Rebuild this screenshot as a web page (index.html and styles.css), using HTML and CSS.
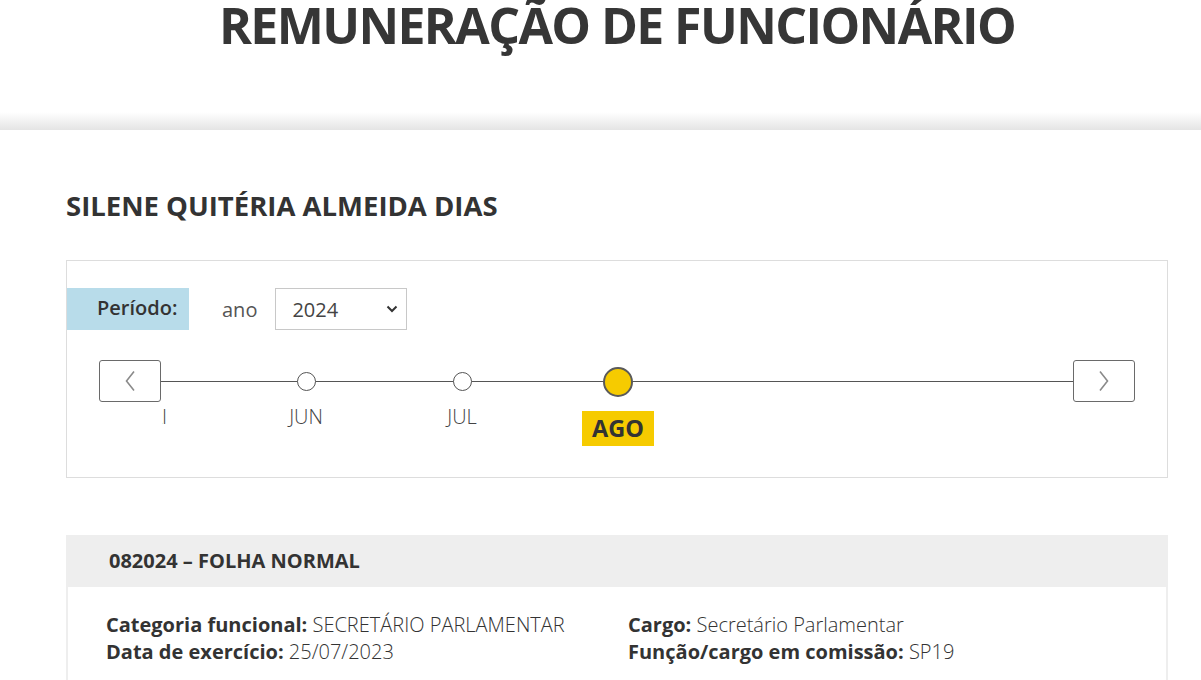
FILE: index.html
```html
<!DOCTYPE html>
<html lang="pt-BR">
<head>
<meta charset="utf-8">
<title>Remuneração de Funcionário</title>
<link rel="stylesheet" href="styles.css">
</head>
<body>
<header class="page-header">
  <div class="container">
    <h1 class="page-title">REMUNERAÇÃO DE FUNCIONÁRIO</h1>
  </div>
</header>
<main class="container main">
  <h2 class="person-name">SILENE QUITÉRIA ALMEIDA DIAS</h2>

  <section class="period-panel">
    <div class="period-row">
      <div class="period-label">Período:</div>
      <span class="year-label">ano</span>
      <div class="year-select">
        <span>2024</span>
        <svg class="select-chevron" width="12" height="8" viewBox="0 0 12 8"><path d="M1.5 1.5 L6 6 L10.5 1.5" fill="none" stroke="#333" stroke-width="2"/></svg>
      </div>
    </div>

    <div class="timeline">
      <button class="nav-btn" type="button" aria-label="Anterior">
        <svg width="12" height="22" viewBox="0 0 12 22"><path d="M10 1.5 L2.5 11 L10 20.5" fill="none" stroke="#8a8a8a" stroke-width="1.6"/></svg>
      </button>
      <div class="track-viewport">
        <div class="track-line"></div>
        <div class="track-window">
          <ol class="track">
            <li class="month"><span class="dot"></span><span class="month-label">MAI</span></li>
            <li class="month"><span class="dot"></span><span class="month-label">JUN</span></li>
            <li class="month"><span class="dot"></span><span class="month-label">JUL</span></li>
            <li class="month active"><span class="dot"></span><span class="month-label">AGO</span></li>
          </ol>
        </div>
      </div>
      <button class="nav-btn" type="button" aria-label="Próximo">
        <svg width="12" height="22" viewBox="0 0 12 22"><path d="M2 1.5 L9.5 11 L2 20.5" fill="none" stroke="#8a8a8a" stroke-width="1.6"/></svg>
      </button>
    </div>
  </section>

  <section class="payroll-card">
    <div class="card-header">082024 – FOLHA NORMAL</div>
    <div class="card-body">
      <div class="info-col">
        <p><b>Categoria funcional:</b> SECRETÁRIO PARLAMENTAR</p>
        <p><b>Data de exercício:</b> 25/07/2023</p>
      </div>
      <div class="info-col">
        <p><b>Cargo:</b> Secretário Parlamentar</p>
        <p><b>Função/cargo em comissão:</b> SP19</p>
      </div>
    </div>
  </section>
</main>
</body>
</html>
```

FILE: styles.css
```css
* { box-sizing: border-box; }

html, body {
  margin: 0;
  padding: 0;
  background: #fff;
  font-family: "Open Sans", "Liberation Sans", sans-serif;
  color: #333;
  overflow: hidden;
}

.container {
  width: 1102px;
  margin-left: 66px;
}

.page-header {
  height: 130px;
  background: linear-gradient(to bottom, #fff 0, #fff 112px, #e4e4e4 130px);
}

.page-title {
  margin: 0;
  font-size: 50px;
  line-height: 50px;
  font-weight: 700;
  text-align: center;
  color: #363636;
  letter-spacing: -1.6px;
}

.main {
  padding-top: 58px;
}

.person-name {
  margin: 0 0 36px;
  font-size: 27.5px;
  line-height: 36px;
  font-weight: 700;
  color: #333;
}

.period-panel {
  border: 1px solid #ddd;
  padding: 27px 32px 31px 0;
}

.period-row {
  display: flex;
  align-items: center;
  height: 42px;
}

.period-label {
  width: 122px;
  height: 42px;
  background: #b8dcea;
  padding-left: 30px;
  font-size: 20px;
  font-weight: 600;
  line-height: 40px;
  color: #333;
}

.year-label {
  margin-left: 33px;
  font-size: 20px;
  font-weight: 400;
  color: #555;
}

.year-select {
  margin-left: 18px;
  width: 132px;
  height: 42px;
  border: 1px solid #c8c8c8;
  display: flex;
  align-items: center;
  justify-content: space-between;
  padding: 0 8px 0 16px;
  font-size: 20px;
  color: #444;
}

.timeline {
  display: flex;
  align-items: flex-start;
  margin-top: 30px;
  margin-left: 32px;
}

.nav-btn {
  flex: none;
  width: 62px;
  height: 42px;
  border: 1px solid #6a6a6a;
  border-radius: 3px;
  background: #fff;
  padding: 0;
  display: flex;
  align-items: center;
  justify-content: center;
}

.track-viewport {
  flex: 1;
  position: relative;
  height: 86px;
}

.track-line {
  position: absolute;
  left: 0;
  right: 0;
  top: 21px;
  height: 1px;
  background: #555;
}

.track-window {
  position: relative;
  margin-left: 1px;
  height: 100%;
  overflow: hidden;
}

.track {
  list-style: none;
  margin: 0 0 0 -90px;
  padding: 0;
  display: flex;
}

.month {
  flex: none;
  width: 156px;
  display: flex;
  flex-direction: column;
  align-items: center;
}

.dot {
  margin-top: 12px;
  width: 19px;
  height: 19px;
  border-radius: 50%;
  border: 1px solid #555;
  background: #fff;
}

.month-label {
  margin-top: 12px;
  font-size: 20px;
  line-height: 28px;
  font-weight: 300;
  color: #444;
}

.month.active .dot {
  margin-top: 7px;
  width: 30px;
  height: 30px;
  border: 2px solid #5a5a5a;
  background: #f6cb00;
}

.month.active .month-label {
  margin-top: 14px;
  height: 35px;
  line-height: 35px;
  padding: 0 10px;
  background: #f6cb00;
  font-size: 23.5px;
  font-weight: 700;
  color: #333;
}

.payroll-card {
  margin-top: 57px;
}

.card-header {
  height: 52px;
  background: #eee;
  padding-left: 43px;
  font-size: 20px;
  font-weight: 700;
  line-height: 52px;
  color: #333;
}

.card-body {
  border-left: 2px solid #eee;
  border-right: 2px solid #eee;
  padding: 24px 0 30px 38px;
  display: grid;
  grid-template-columns: 522px 1fr;
}

.info-col p {
  margin: 0;
  font-size: 20px;
  line-height: 27px;
  font-weight: 300;
  color: #333;
}

.info-col b {
  font-weight: 700;
}
```
